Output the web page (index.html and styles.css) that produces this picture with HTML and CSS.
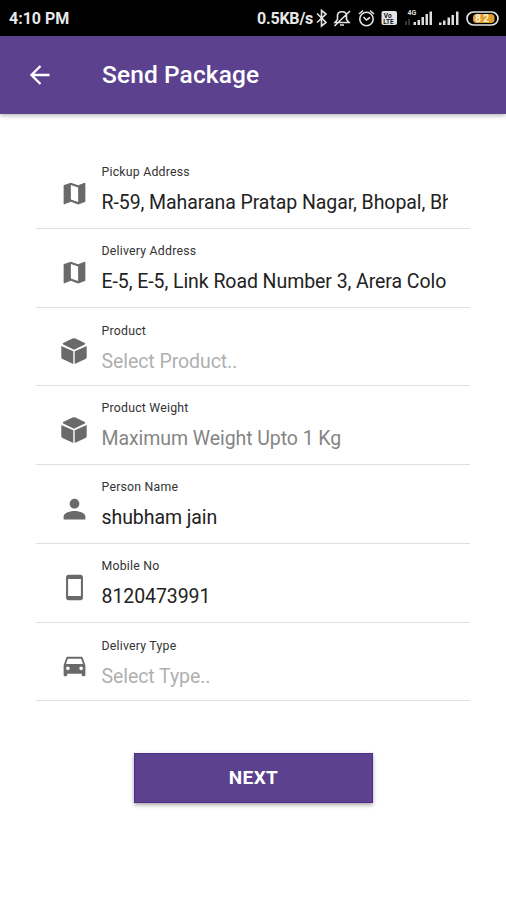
FILE: index.html
```html
<!DOCTYPE html>
<html lang="en">
<head>
<meta charset="utf-8">
<title>Send Package</title>
<link rel="stylesheet" href="styles.css">
</head>
<body>
<svg class="defs" aria-hidden="true">
  <symbol id="map" viewBox="0 0 24 24"><path d="M20.500 3l-.16.03L15 5.100 9 3 3.360 4.900c-.21.07-.36.25-.36.48V20.500c0 .28.22.5.5.5l.16-.03L9 18.900l6 2.100 5.640-1.900c.21-.07.36-.25.36-.48V3.500c0-.28-.22-.5-.5-.5zM15 19l-6-2.110V5l6 2.110V19z"/></symbol>
  <symbol id="cube" viewBox="0 0 26 26"><path d="M11.500 .6Q13 0 14.500 .6L23.800 5.100Q24.900 5.800 23.800 6.400L13 11.700 2.200 6.400Q1.100 5.800 2.200 5.100zM.3 8L12.300 13.300V26L1.500 21Q.3 20.400 .3 19.200zM25.700 8L13.700 13.300V26L24.500 21Q25.700 20.400 25.700 19.200z"/></symbol>
  <symbol id="person" viewBox="0 0 24 24"><path d="M12 12c2.210 0 4-1.790 4-4s-1.790-4-4-4-4 1.790-4 4 1.790 4 4 4zm0 2c-3 0-9 1.340-9 4.500V21h18v-2.500c0-3.160-6-4.500-9-4.500z"/></symbol>
  <symbol id="phone" viewBox="0 0 24 24"><path d="M17 1.500H7c-1.100 0-2 .9-2 2v17c0 1.100.9 2 2 2h10c1.100 0 2-.9 2-2v-17c0-1.100-.9-2-2-2zM17.300 19H6.700V5h10.600v14z"/></symbol>
  <symbol id="car" viewBox="0 0 24 24"><path d="M18.920 5.010C18.720 4.420 18.160 4 17.500 4h-11c-.66 0-1.210.42-1.420 1.010L3 11v8c0 .55.45 1 1 1h1c.55 0 1-.45 1-1v-1h12v1c0 .55.45 1 1 1h1c.55 0 1-.45 1-1v-8l-2.080-5.990zM6.500 15c-.83 0-1.500-.67-1.500-1.500S5.670 12 6.500 12s1.500.67 1.500 1.500S7.330 15 6.500 15zm11 0c-.83 0-1.500-.67-1.500-1.500s.67-1.500 1.500-1.500 1.500.67 1.500 1.500-.67 1.500-1.500 1.500zM5 10l1.500-4.500h11L19 10H5z"/></symbol>
</svg>

<div class="status">
  <span class="clock">4:10 PM</span>
  <span class="speed">0.5KB/s</span>
  <svg class="status-icons" viewBox="0 0 190 36">
    <g fill="none" stroke="#e4e4e4" stroke-width="1.600">
      <path d="M2 13.500l9 9-4.500 3.500V10.500L11 14l-9 8.500"/>
      <path d="M20 22.500h14l-2.500-3v-4c0-5-9-5-9 0v4zM25 25h4M19.500 26L35 11"/>
      <circle cx="51.500" cy="19" r="6.700"/><path d="M48.500 17l3 3 3.500-2.500M44 14l4-3.500M59 14l-4-3.500"/>
    </g>
    <rect x="66.500" y="11" width="15.500" height="14" rx="2" fill="#e4e4e4"/>
    <text x="68.800" y="17.500" class="volte">Vo</text>
    <text x="68.200" y="23.800" class="volte">LTE</text>
    <path d="M98.500 25v-3h2.500v3zM102.500 25v-5h2.500v5zM106.500 25v-8h2.500v8zM110.500 25V14h2.500v11zM114.500 25V11.500h2.500V25zM124 25v-2.500h2.500V25zM128 25v-4.500h2.500V25zM132.500 25v-7.500h2.500V25zM136.500 25V15h2.500v10zM141 25V11.500h2.500V25z" fill="#ddd"/>
    <path d="M91 25v-4M94 25v-6" stroke="#444" stroke-width="1.500"/>
    <text x="92.500" y="14.500" class="net">4G</text>
    <rect x="152" y="12" width="31" height="13" rx="6.500" fill="none" stroke="#e4e4e4" stroke-width="1.700"/>
    <rect x="158" y="14" width="21.500" height="9" rx="3.500" fill="#dda02f"/>
    <text x="160" y="22.200" class="level">82</text>
  </svg>
</div>

<header class="appbar">
  <svg class="back" viewBox="0 0 20 20"><path d="M19.500 10H2M10.500 1L1.500 10l9 9" fill="none" stroke="#fff" stroke-width="2.300"/></svg>
  <h1>Send Package</h1>
</header>

<main class="form">
  <div class="field"><svg class="icon"><use href="#map"/></svg><div class="body"><div class="label">Pickup Address</div><div class="value">R-59, Maharana Pratap Nagar, Bhopal, Bh</div></div></div>
  <div class="field"><svg class="icon"><use href="#map"/></svg><div class="body"><div class="label">Delivery Address</div><div class="value">E-5, E-5, Link Road Number 3, Arera Colo</div></div></div>
  <div class="field select"><svg class="icon cube"><use href="#cube"/></svg><div class="body"><div class="label">Product</div><div class="value">Select Product..</div></div></div>
  <div class="field hint"><svg class="icon cube"><use href="#cube"/></svg><div class="body"><div class="label">Product Weight</div><div class="value">Maximum Weight Upto 1 Kg</div></div></div>
  <div class="field"><svg class="icon"><use href="#person"/></svg><div class="body"><div class="label">Person Name</div><div class="value">shubham jain</div></div></div>
  <div class="field"><svg class="icon"><use href="#phone"/></svg><div class="body"><div class="label">Mobile No</div><div class="value">8120473991</div></div></div>
  <div class="field select"><svg class="icon"><use href="#car"/></svg><div class="body"><div class="label">Delivery Type</div><div class="value">Select Type..</div></div></div>
</main>
<button class="next">NEXT</button>
</body>
</html>
```

FILE: styles.css
```css
* { box-sizing: border-box; }
body {
  margin: 0;
  height: 900px;
  overflow: hidden;
  background: #fff;
  font-family: Roboto, sans-serif;
  color: #222;
}
.defs { display: none; }
.status {
  display: flex;
  align-items: center;
  height: 36px;
  padding-left: 9px;
  background: #000;
  color: #e8e8e8;
  font-weight: 700;
}
.clock { width: 248px; font-size: 16px; line-height: 20px; padding-top: 1px; }
.speed { width: 58px; font-size: 16px; line-height: 20px; letter-spacing: -.2px; padding-top: 1px; }
.status-icons { width: 190px; height: 36px; flex: none; }
.net { font: 700 7px Roboto, sans-serif; fill: #ddd; }
.volte { font: 700 6.500px Roboto, sans-serif; fill: #111; }
.level { font: 700 10.500px Roboto, sans-serif; letter-spacing: 2px; fill: #fff0d0; }
.appbar {
  display: flex;
  align-items: center;
  height: 78px;
  padding-left: 30px;
  background: #5c418f;
  box-shadow: 0 1px 5px rgba(0, 0, 0, .35);
}
.back { width: 20px; height: 20px; margin-right: 52px; }
h1 {
  margin: -2px 0 0;
  color: #fff;
  font-size: 24.500px;
  font-weight: 500;
  letter-spacing: .1px;
}
.form { margin: 36px 36px 0; }
.field {
  display: flex;
  height: 78.750px;
  border-bottom: 1.500px solid #dfdfdf;
}
.icon {
  flex: none;
  width: 29px;
  height: 29px;
  margin: 29px 13px 0 23.500px;
  fill: #6a6a6a;
}
.icon.cube { width: 26px; height: 26px; margin: 30.500px 14.500px 0 25px; }
.body { width: 346px; padding-top: 14px; overflow: hidden; }
.label { font-size: 12.300px; line-height: 16px; letter-spacing: .22px; color: #333; }
.value {
  margin-top: 10px;
  font-size: 19.500px;
  line-height: 26px;
  letter-spacing: -.07px;
  white-space: nowrap;
}
.select .body { padding-top: 15.500px; }
.select .value { color: #b0b0b0; }
.hint .value { color: #858585; }
.next {
  display: block;
  width: 239px;
  height: 50px;
  margin: 51.750px 0 0 134px;
  padding: 0 0 2px;
  border: 1px solid #4c2d8c;
  background: #5c418f;
  box-shadow: 0 2px 4px rgba(0, 0, 0, .35);
  color: #fff;
  font: 700 19px Roboto, sans-serif;
  letter-spacing: .4px;
}
```
